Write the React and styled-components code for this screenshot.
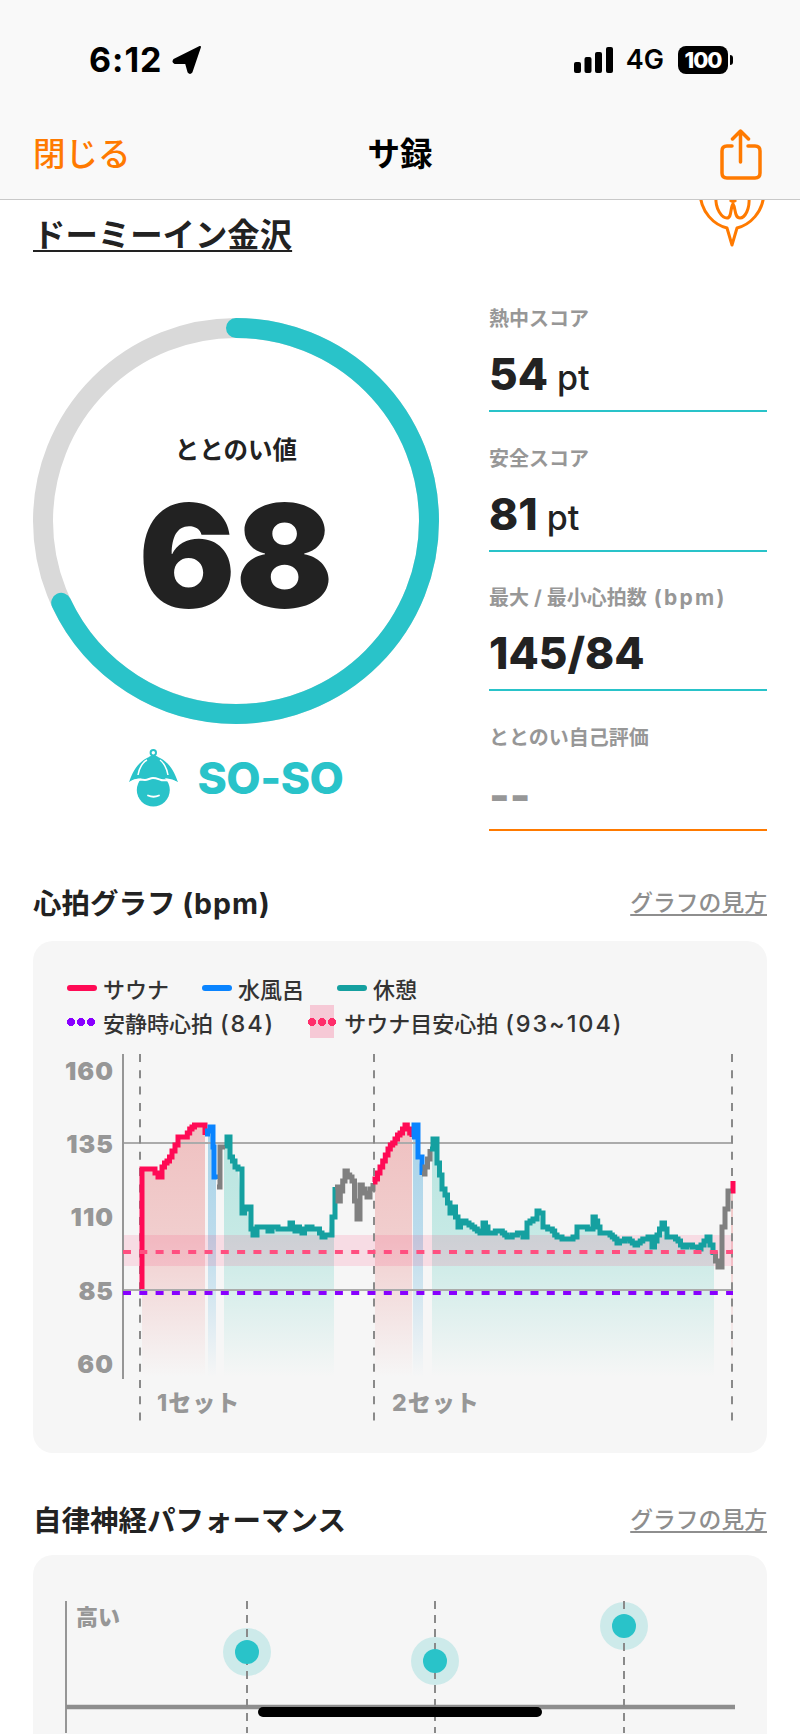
import React from 'react';
import styled, { createGlobalStyle } from 'styled-components';

const TEAL = '#29c3c9';
const ORANGE = '#ff7a00';
const INK = '#222222';
const MUTED = '#979797';

const GlobalStyle = createGlobalStyle`
  html, body { margin: 0; padding: 0; background: #fff; }
  body { font-family: "Inter", "Noto Sans CJK JP", "Noto Sans", sans-serif; color: ${INK}; }
`;

const Page = styled.div`
  position: relative;
  width: 800px;
  height: 1734px;
  overflow: hidden;
  background: #fff;
`;

const Header = styled.header`
  position: relative;
  z-index: 2;
  background: #f9f9f9;
  border-bottom: 1px solid #c9c9c9;
`;

const StatusBar = styled.div`
  height: 119px;
  display: flex;
  align-items: center;
  padding: 0 72px 0 89px;
  color: #000;
`;

const Clock = styled.span`
  font-size: 34px;
  font-weight: 700;
  letter-spacing: 1px;
`;

const StatusRight = styled.div`
  margin-left: auto;
  display: flex;
  align-items: center;
`;

const Network = styled.span`
  margin: 0 14px 0 13px;
  font-size: 27px;
  font-weight: 600;
`;

const Battery = styled.span`
  position: relative;
  width: 50px;
  height: 28px;
  border-radius: 8px;
  background: #000;
  color: #fff;
  font-size: 22px;
  font-weight: 800;
  letter-spacing: -1px;
  line-height: 28px;
  text-align: center;

  &::after {
    content: '';
    position: absolute;
    right: -5px;
    top: 9px;
    width: 3px;
    height: 10px;
    border-radius: 0 3px 3px 0;
    background: #000;
  }
`;

const NavBar = styled.nav`
  height: 80px;
  box-sizing: border-box;
  padding: 0 33px 16px 33px;
  display: grid;
  grid-template-columns: 1fr auto 1fr;
  align-items: center;
`;

const CloseLink = styled.span`
  color: ${ORANGE};
  font-size: 32.500px;
  font-weight: 500;
`;

const NavTitle = styled.span`
  color: #000;
  font-size: 32.500px;
  font-weight: 700;
`;

const ShareButton = styled.span`
  justify-self: end;
  display: flex;
  margin: 9px 4px 0 0;
`;

const Content = styled.main`
  padding: 0 33px;
`;

const TitleRow = styled.div`
  position: relative;
  padding-top: 14px;
`;

const HotelName = styled.h1`
  margin: 0;
  font-size: 32.400px;
  line-height: 44px;
  font-weight: 700;
  text-decoration: underline;
  text-decoration-thickness: 2px;
  text-underline-offset: 3px;
`;

const PinBadge = styled.svg`
  position: absolute;
  right: 0;
  top: -43px;
`;

const Hero = styled.section`
  margin-top: 45px;
  display: grid;
  grid-template-columns: 406px 278px;
  column-gap: 50px;
`;

const RingColumn = styled.div`
  padding-top: 15px;
  display: flex;
  flex-direction: column;
  align-items: center;
`;

const Ring = styled.div`
  display: grid;
  width: 406px;
  height: 406px;

  & > * { grid-area: 1 / 1; }
`;

const RingCenter = styled.div`
  display: flex;
  flex-direction: column;
  align-items: center;
  padding-top: 115px;
`;

const RingLabel = styled.span`
  font-size: 24.500px;
  line-height: 34px;
  font-weight: 700;
`;

const RingValue = styled.span`
  margin-top: 17px;
  font-size: 144px;
  line-height: 144px;
  font-weight: 900;
`;

const Mood = styled.div`
  margin-top: 25px;
  display: flex;
  align-items: center;
  gap: 18px;
`;

const MoodText = styled.span`
  color: ${TEAL};
  font-size: 44.500px;
  line-height: 50px;
  font-weight: 800;
  letter-spacing: -0.5px;
`;

const ScoreColumn = styled.div`
  display: flex;
  flex-direction: column;
  gap: 30.5px;
`;

const ScoreRow = styled.div`
  height: 109px;
  box-sizing: border-box;
  border-bottom: 2px solid ${p => p.$accent || TEAL};
`;

const ScoreLabel = styled.div`
  padding-top: 2px;
  color: ${MUTED};
  font-size: 20px;
  line-height: 28px;
  font-weight: 700;
`;

const LabelLatin = styled.span`
  margin-left: 7px;
  font-size: 21px;
  letter-spacing: 2.300px;
`;

const LabelSlash = styled.span`
  margin: 0 5px;
`;

const ScoreValue = styled.div`
  margin-top: ${p => p.$empty ? 18 : 16}px;
  font-size: 44px;
  line-height: 50px;
  font-weight: 800;
  color: ${p => p.$empty ? MUTED : INK};
`;

const ScoreUnit = styled.span`
  margin-left: 9px;
  font-size: 34px;
  font-weight: 500;
`;

const SectionHead = styled.div`
  margin-top: ${p => p.$top}px;
  display: flex;
  justify-content: space-between;
  align-items: center;
  height: 40px;
`;

const SectionTitle = styled.h2`
  margin: 0;
  font-size: 28.500px;
  font-weight: 700;
`;

const TitleLatin = styled.span`
  letter-spacing: 1px;
`;

const GuideLink = styled.span`
  color: #8e8e8e;
  font-size: 22.800px;
  font-weight: 500;
  text-decoration: underline;
  text-underline-offset: 3px;
`;

const Card = styled.div`
  margin-top: ${p => p.$top}px;
  padding-bottom: ${p => p.$bottom || 0}px;
  border-radius: 20px;
  background: #f6f6f6;
  overflow: hidden;
`;

const Legend = styled.div`
  position: relative;
  z-index: 0;
  padding: 30px 0 10px 34px;
`;

const LegendRow = styled.div`
  display: flex;
  align-items: center;
  gap: 33px;
  height: 34px;
`;

const LegendItem = styled.span`
  display: flex;
  align-items: center;
  gap: 6px;
  font-size: 22px;
  font-weight: 500;
  color: #333;
`;

const LegendNum = styled.span`
  margin-left: 7px;
  font-size: 23.500px;
  letter-spacing: 1.900px;
`;

const LineSwatch = styled.i`
  width: 30px;
  height: 6px;
  border-radius: 3px;
  background: ${p => p.$color};
`;

const DotSwatch = styled.i`
  position: relative;
  width: 28px;
  height: 8px;
  margin-right: 2px;
  background: radial-gradient(circle 4px at 4px 4px, ${p => p.$color} 96%, transparent) 0 0 / 10px 8px repeat-x;

  ${p => p.$band && `
    &::before {
      content: '';
      position: absolute;
      z-index: -1;
      left: 2px;
      top: -13px;
      width: 24px;
      height: 33px;
      background: #f6c9d6;
    }
  `}
`;

const ChartSvg = styled.svg`
  display: block;
`;

const AxisText = styled.text`
  fill: ${MUTED};
  font-size: ${p => p.$size || 25}px;
  font-weight: ${p => p.$weight || 900};
  letter-spacing: ${p => p.$spacing ?? 1}px;
  font-family: "Inter", "Noto Sans CJK JP", sans-serif;
`;

const HomeIndicator = styled.div`
  position: absolute;
  z-index: 3;
  left: 258px;
  top: 1707px;
  width: 284px;
  height: 10px;
  border-radius: 5px;
  background: #000;
`;

// 折れ線は階段状に描く
const stepPath = (pts) => {
  let d = `M${pts[0][0]} ${pts[0][1]}`;
  for (let i = 1; i < pts.length; i++) {
    const [x0, y0] = pts[i - 1];
    const [x1, y1] = pts[i];
    const n = Math.max(1, Math.round((x1 - x0) / 2.8));
    for (let k = 1; k <= n; k++) {
      const x = x0 + ((x1 - x0) * k) / n;
      const y = y0 + ((y1 - y0) * k) / n;
      d += ` H${x.toFixed(1)} V${(Math.round(y / 2) * 2).toFixed(0)}`;
    }
  }
  return d;
};

const series = [
  { color: '#ff0a55', pts: [[142, 1290], [142, 1170], [152, 1170], [158, 1178], [162, 1167], [167, 1162], [172, 1152], [178, 1138], [185, 1137], [192, 1127], [202, 1125], [205, 1135]] },
  { color: '#0a84ff', pts: [[205, 1135], [210, 1127], [213, 1147], [214, 1178], [217, 1180]] },
  { color: '#808080', pts: [[217, 1188], [220, 1148], [225, 1147]] },
  { color: '#15a0a0', pts: [[225, 1147], [227, 1138], [230, 1157], [235, 1168], [238, 1170], [242, 1213], [247, 1207], [251, 1230], [253, 1235], [257, 1227], [265, 1227], [268, 1232], [272, 1227], [278, 1230], [287, 1230], [290, 1223], [295, 1232], [297, 1227], [302, 1233], [307, 1228], [317, 1230], [322, 1238], [328, 1235], [332, 1217], [335, 1188]] },
  { color: '#808080', pts: [[335, 1188], [338, 1202], [345, 1172], [352, 1182], [357, 1220], [360, 1185], [367, 1197], [373, 1183]] },
  { color: '#ff0a55', pts: [[373, 1183], [375, 1180], [380, 1167], [388, 1150], [395, 1140], [405, 1126], [412, 1138]] },
  { color: '#0a84ff', pts: [[412, 1138], [414, 1126], [418, 1157], [422, 1175]] },
  { color: '#808080', pts: [[422, 1175], [425, 1168], [430, 1150]] },
  { color: '#15a0a0', pts: [[430, 1150], [433, 1139], [437, 1163], [442, 1190], [445, 1195], [450, 1213], [453, 1207], [458, 1227], [463, 1222], [472, 1228], [480, 1233], [483, 1223], [488, 1233], [493, 1233], [500, 1232], [507, 1238], [520, 1233], [523, 1238], [527, 1223], [533, 1220], [537, 1212], [539, 1213], [543, 1227], [550, 1230], [557, 1238], [567, 1240], [573, 1238], [577, 1227], [590, 1230], [593, 1217], [600, 1233], [610, 1235], [617, 1243], [627, 1240], [635, 1245], [648, 1238], [652, 1248], [662, 1223], [667, 1238], [673, 1237], [683, 1248], [687, 1245], [698, 1250], [707, 1238], [713, 1255]] },
  { color: '#808080', pts: [[713, 1255], [718, 1268], [722, 1227], [728, 1192], [731, 1192]] },
  { color: '#ff0a55', pts: [[731, 1192], [733, 1182]] },
];

const fills = [
  { x: 142, w: 63, c: 'red' },
  { x: 208, w: 8, c: 'blue' },
  { x: 224, w: 110, c: 'teal' },
  { x: 375, w: 37, c: 'red' },
  { x: 413, w: 10, c: 'blue' },
  { x: 432, w: 282, c: 'teal' },
  { x: 731, w: 2, c: 'red' },
];

// 各区間の塗りは折れ線の下だけにする
const clipTop = (x0, x1) => {
  const pts = series.flatMap(s => s.pts).filter(p => p[0] >= x0 && p[0] <= x1);
  const inner = pts.map(p => `${p[0]},${p[1]}`).join(' ');
  return `${x0},1380 ${x0},${pts[0] ? pts[0][1] : 1180} ${inner} ${x1},${pts.length ? pts[pts.length - 1][1] : 1180} ${x1},1380`;
};

const Gradient = ({ id, color, top }) => (
  <linearGradient id={id} gradientUnits="userSpaceOnUse" x1="0" y1="1130" x2="0" y2="1378">
    <stop offset="0" stopColor={color} stopOpacity={top} />
    <stop offset="0.45" stopColor={color} stopOpacity={top * 0.75} />
    <stop offset="1" stopColor={color} stopOpacity="0" />
  </linearGradient>
);

const HeartChart = () => (
  <ChartSvg width="734" height="384" viewBox="33 1050 734 384">
    <defs>
      <Gradient id="red" color="#e25a5a" top={0.34} />
      <Gradient id="blue" color="#4aa8d8" top={0.45} />
      <Gradient id="teal" color="#3dc4b4" top={0.34} />
    </defs>
    {fills.map(f => (
      <polygon key={f.x} points={clipTop(f.x, f.x + f.w)} fill={`url(#${f.c})`} />
    ))}
    <rect x="123" y="1236" width="610" height="31" fill="#ff2d6a" opacity="0.13" />
    <line x1="123" x2="733" y1="1144" y2="1144" stroke="#ababab" strokeWidth="2" />
    <line x1="123" x2="733" y1="1291" y2="1291" stroke="#ababab" strokeWidth="2" />
    <line x1="123" x2="123" y1="1055" y2="1380" stroke="#969696" strokeWidth="2" />
    {[140, 374, 732].map(x => (
      <line key={x} x1={x} x2={x} y1="1055" y2="1422" stroke="#8a8a8a" strokeWidth="2" strokeDasharray="8 8.3" />
    ))}
    {series.map((s, i) => (
      <path key={i} d={stepPath(s.pts)} fill="none" stroke={s.color} strokeWidth="5" />
    ))}
    <line x1="123" x2="733" y1="1253" y2="1253" stroke="#ff4f80" strokeWidth="4" strokeDasharray="8 8.3" />
    <line x1="123" x2="733" y1="1294" y2="1294" stroke="#8800ff" strokeWidth="4" strokeDasharray="8 8.3" />
    {[[160, 1081], [135, 1154], [110, 1227], [85, 1301], [60, 1374]].map(([v, y]) => (
      <AxisText key={v} x="114" y={y} textAnchor="end">{v}</AxisText>
    ))}
    <AxisText x="157" y="1412" $size={23} $weight={800}>1セット</AxisText>
    <AxisText x="392" y="1412" $size={23} $weight={800}>2セット</AxisText>
  </ChartSvg>
);

const NerveChart = () => (
  <ChartSvg width="734" height="178" viewBox="33 1556 734 178">
    <line x1="66" x2="66" y1="1602" y2="1734" stroke="#969696" strokeWidth="2" />
    <line x1="66" x2="735" y1="1708" y2="1708" stroke="#8e8e8e" strokeWidth="4.5" />
    {[[247, 1653], [435, 1662], [624, 1627]].map(([x, y]) => (
      <g key={x}>
        <circle cx={x} cy={y} r="24" fill="#cdeaea" />
        <line x1={x} x2={x} y1="1602" y2="1734" stroke="#8a8a8a" strokeWidth="2" strokeDasharray="8 6" />
        <circle cx={x} cy={y} r="12" fill={TEAL} />
      </g>
    ))}
    <AxisText x="76" y="1626" $size={22} $spacing={0} $weight={800}>高い</AxisText>
  </ChartSvg>
);

const LocationSvg = styled.svg`
  margin-left: 8px;
`;

const LocationIcon = () => (
  <LocationSvg width="32" height="30" viewBox="0 0 32 30">
    <path d="M29 2 L3 15 Q1.500 17 4 18 L15 18 L17.500 27 Q19 29 20.500 27 Z" fill="#000" stroke="#000" strokeWidth="2" strokeLinejoin="round" />
  </LocationSvg>
);

const SignalIcon = () => (
  <svg width="39" height="26" viewBox="0 0 39 26">
    <rect x="0" y="15" width="7" height="11" rx="2" fill="#000" />
    <rect x="10.500" y="10" width="7" height="16" rx="2" fill="#000" />
    <rect x="21" y="5" width="7" height="21" rx="2" fill="#000" />
    <rect x="32" y="0" width="7" height="26" rx="2" fill="#000" />
  </svg>
);

const ShareIcon = () => (
  <svg width="44" height="54" viewBox="0 0 44 54" fill="none" stroke={ORANGE} strokeWidth="3.5" strokeLinecap="round" strokeLinejoin="round">
    <path d="M13 17 H8 Q3 17 3 22 V44 Q3 49 8 49 H36 Q41 49 41 44 V22 Q41 17 36 17 H29" />
    <path d="M21.500 33 V3 M13.500 10 L21.500 2 L29.500 10" />
  </svg>
);

const PinIcon = () => (
  <PinBadge width="70" height="90" viewBox="0 0 70 90" fill="none" stroke={ORANGE} strokeWidth="3" strokeLinejoin="round">
    <path d="M3 34 C3 56 18 68 30 71 L35 88 L40 71 C52 68 67 56 67 34" />
    <path d="M19 40 C18 52 25 61 30 61 C35 61 33 51 36 47 C39 51 37 61 43 61 C48 61 53 52 52 40" />
    <path d="M33 43 C35 45 37 45 39 43" />
  </PinBadge>
);

const HatIcon = () => (
  <svg width="51" height="58" viewBox="0 0 51 58">
    <circle cx="25.300" cy="3.700" r="2.700" fill="none" stroke={TEAL} strokeWidth="2" />
    <circle cx="25.300" cy="41" r="16.500" fill={TEAL} />
    <path d="M1 33.500 C5 20 13 11 21 8 C23 6 28 6 30 8 C38 11 46 20 50 33.500 C42 28 36 30 33 29 C30 28 28 27 25 27 C22 27 20 29 17 29 C13 30 8 28 1 33.500 Z" fill={TEAL} />
    <path d="M0 35 C8 29 13 31 17 31 C20 31 22 29 25 29 C28 29 30 30 33 31 C36 32 42 29 51 35" fill="none" stroke="#fff" strokeWidth="2" />
    <path d="M10 26 C11 19 15 13 19 11 M40 26 C39 19 35 13 32 11" fill="none" stroke="#fff" strokeWidth="1.500" />
    <path d="M20 46.500 Q25.500 49 31 46.500" fill="none" stroke="#fff" strokeWidth="1.800" strokeLinecap="round" />
  </svg>
);

const ScoreRing = () => {
  const r = 193;
  const c = 2 * Math.PI * r;
  return (
    <svg width="406" height="406" viewBox="0 0 406 406">
      <circle cx="203" cy="203" r={r} fill="none" stroke="#d9d9d9" strokeWidth="20" />
      <circle
        cx="203"
        cy="203"
        r={r}
        fill="none"
        stroke={TEAL}
        strokeWidth="20"
        strokeLinecap="round"
        strokeDasharray={`${c * 0.68} ${c}`}
        transform="rotate(-90 203 203)"
      />
    </svg>
  );
};

const scores = [
  { label: '熱中スコア', value: '54', unit: 'pt' },
  { label: '安全スコア', value: '81', unit: 'pt' },
  {
    label: <>最大<LabelSlash>/</LabelSlash>最小心拍数<LabelLatin>(bpm)</LabelLatin></>,
    value: '145/84',
  },
];

const App = () => (
  <Page>
    <GlobalStyle />
    <Header>
      <StatusBar>
        <Clock>6:12</Clock>
        <LocationIcon />
        <StatusRight>
          <SignalIcon />
          <Network>4G</Network>
          <Battery>100</Battery>
        </StatusRight>
      </StatusBar>
      <NavBar>
        <CloseLink>閉じる</CloseLink>
        <NavTitle>サ録</NavTitle>
        <ShareButton><ShareIcon /></ShareButton>
      </NavBar>
    </Header>
    <Content>
      <TitleRow>
        <HotelName>ドーミーイン金沢</HotelName>
        <PinIcon />
      </TitleRow>
      <Hero>
        <RingColumn>
          <Ring>
            <ScoreRing />
            <RingCenter>
              <RingLabel>ととのい値</RingLabel>
              <RingValue>68</RingValue>
            </RingCenter>
          </Ring>
          <Mood>
            <HatIcon />
            <MoodText>SO-SO</MoodText>
          </Mood>
        </RingColumn>
        <ScoreColumn>
          {scores.map(s => (
            <ScoreRow key={s.value}>
              <ScoreLabel>{s.label}</ScoreLabel>
              <ScoreValue>{s.value}{s.unit && <ScoreUnit>{s.unit}</ScoreUnit>}</ScoreValue>
            </ScoreRow>
          ))}
          <ScoreRow $accent={ORANGE}>
            <ScoreLabel>ととのい自己評価</ScoreLabel>
            <ScoreValue $empty>--</ScoreValue>
          </ScoreRow>
        </ScoreColumn>
      </Hero>
      <SectionHead $top={51}>
        <SectionTitle>心拍グラフ <TitleLatin>(bpm)</TitleLatin></SectionTitle>
        <GuideLink>グラフの見方</GuideLink>
      </SectionHead>
      <Card $top={19} $bottom={20}>
        <Legend>
          <LegendRow>
            <LegendItem><LineSwatch $color="#ff0a55" />サウナ</LegendItem>
            <LegendItem><LineSwatch $color="#0a84ff" />水風呂</LegendItem>
            <LegendItem><LineSwatch $color="#15a0a0" />休憩</LegendItem>
          </LegendRow>
          <LegendRow>
            <LegendItem><DotSwatch $color="#8800ff" /><span>安静時心拍<LegendNum>(84)</LegendNum></span></LegendItem>
            <LegendItem><DotSwatch $color="#ff2d6a" $band /><span>サウナ目安心拍<LegendNum>(93~104)</LegendNum></span></LegendItem>
          </LegendRow>
        </Legend>
        <HeartChart />
      </Card>
      <SectionHead $top={46}>
        <SectionTitle>自律神経パフォーマンス</SectionTitle>
        <GuideLink>グラフの見方</GuideLink>
      </SectionHead>
      <Card $top={16} $bottom={40}>
        <NerveChart />
      </Card>
    </Content>
    <HomeIndicator />
  </Page>
);

export default App;
